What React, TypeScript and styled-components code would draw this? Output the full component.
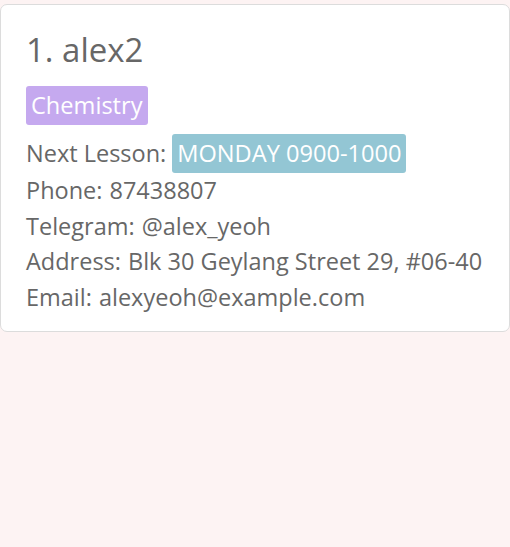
import React from "react";
import styled, { createGlobalStyle } from "styled-components";

const Global = createGlobalStyle`
  html, body { margin: 0; padding: 0; background: #fdf3f3; }
  body { font-family: "Open Sans", "Noto Sans", sans-serif; }
`;

const Page = styled.div`
  padding-top: 4px;
  min-height: 543px;
  background: #fdf3f3;
`;

const Card = styled.div`
  box-sizing: border-box;
  width: 510px;
  height: 328px;
  background: #ffffff;
  border: 1px solid #dcdcdc;
  border-radius: 7px;
  padding: 25px 20px 0 25px;
  color: #676767;
`;

const Title = styled.div`
  font-size: 33px;
  line-height: 40px;
`;

const TagRow = styled.div`
  display: flex;
  margin-top: 16px;
`;

const Tag = styled.span<{ $bg: string }>`
  display: inline-block;
  background: ${(p) => p.$bg};
  color: #ffffff;
  font-size: 23.6px;
  line-height: 39px;
  height: 39px;
  padding: 0 5px;
  border-radius: 3px;
`;

const Line = styled.div`
  display: flex;
  align-items: center;
  font-size: 23.5px;
  line-height: 35.5px;
  white-space: nowrap;
`;

const LessonLine = styled(Line)`
  margin-top: 9px;
  gap: 6px;
`;

const Label = styled.span`
  margin-right: 7px;
`;

export default function App() {
  return (
    <>
      <Global />
      <Page>
        <Card>
          <Title>1. alex2</Title>
          <TagRow>
            <Tag $bg="#c5a9ef">Chemistry</Tag>
          </TagRow>
          <LessonLine>
            <span>Next Lesson:</span>
            <Tag $bg="#93c6d4">MONDAY 0900-1000</Tag>
          </LessonLine>
          <Line><Label>Phone:</Label>87438807</Line>
          <Line><Label>Telegram:</Label>@alex_yeoh</Line>
          <Line><Label>Address:</Label>Blk 30 Geylang Street 29, #06-40</Line>
          <Line><Label>Email:</Label>alexyeoh@example.com</Line>
        </Card>
      </Page>
    </>
  );
}
